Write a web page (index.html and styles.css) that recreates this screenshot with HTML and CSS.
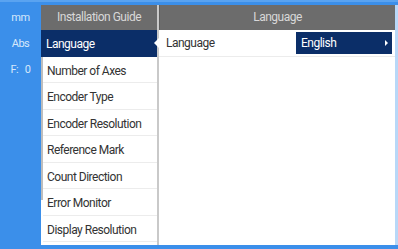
FILE: index.html
```html
<!DOCTYPE html>
<html lang="en">
<head>
    <meta charset="UTF-8">
    <title>Installation Guide</title>
    <link rel="stylesheet" href="styles.css">
</head>
<body>
    <div class="screen">
        <div class="status">
            <div class="status-item">mm</div>
            <div class="status-item">Abs</div>
            <div class="status-item">F:&nbsp;&nbsp;&nbsp;0</div>
        </div>

        <div class="menu">
            <div class="panel-head">Installation Guide</div>
            <ul class="menu-list">
                <li class="menu-item selected">Language</li>
                <li class="menu-item">Number of Axes</li>
                <li class="menu-item">Encoder Type</li>
                <li class="menu-item">Encoder Resolution</li>
                <li class="menu-item">Reference Mark</li>
                <li class="menu-item">Count Direction</li>
                <li class="menu-item">Error Monitor</li>
                <li class="menu-item">Display Resolution</li>
            </ul>
        </div>

        <div class="detail">
            <div class="panel-head">Language</div>
            <div class="setting">
                <span class="setting-label">Language</span>
                <span class="setting-value">English<span class="caret"></span></span>
            </div>
        </div>
    </div>
</body>
</html>
```

FILE: styles.css
```css
html, body {
    margin: 0;
    height: 249px;
    overflow: hidden;
}
body {
    background: #3b8fea;
    font-family: Roboto, "Liberation Sans", Arial, sans-serif;
    font-size: 12px;
    letter-spacing: -0.5px;
    color: #333;
    border-top: 2px solid #5aa3f0;
    box-sizing: border-box;
}
.screen {
    display: flex;
    height: 240px;
    padding-top: 3px;
}
.status {
    width: 41px;
    display: flex;
    flex-direction: column;
    align-items: center;
    padding-top: 6px;
    gap: 13px;
    color: #d6e8fb;
    font-size: 11px;
}
.panel-head {
    height: 25px;
    line-height: 25px;
    background: #6c6c6c;
    color: #d8d8d8;
    text-align: center;
    font-size: 12px;
}
.menu {
    width: 116px;
    background: #fff;
    border-right: 2px solid #c9c9c9;
    display: flex;
    flex-direction: column;
}
.menu-list {
    list-style: none;
    margin: 0;
    padding: 0 0 0 2px;
    flex: 1;
    position: relative;
}
/* scroll indicator */
.menu-list::before {
    content: "";
    position: absolute;
    left: 0;
    top: 0;
    width: 2px;
    height: 170px;
    background: #bdbdbd;
}
.menu-item {
    height: 26.5px;
    line-height: 28px;
    padding-left: 4px;
    border-bottom: 1px solid #ececec;
    box-sizing: border-box;
    position: relative;
    white-space: nowrap;
}
.menu-item.selected {
    background: #0b2e68;
    color: #fff;
    margin-left: -2px;
    padding-left: 5px;
    border-bottom: none;
    z-index: 1;
}
.menu-item.selected::after {
    content: "";
    position: absolute;
    right: -2px;
    top: 8px;
    border-style: solid;
    border-width: 5px 5px 5px 0;
    border-color: transparent #fff transparent transparent;
}
.detail {
    flex: 1;
    background: #fff;
    border-right: 3px solid #b8d8f8;
}
.detail .panel-head {
    border-left: 1px solid #5e5e5e;
}
.setting {
    height: 27px;
    display: flex;
    align-items: center;
    justify-content: space-between;
    padding: 0 3px 0 7px;
    border-bottom: 1px solid #ececec;
    box-sizing: border-box;
}
.setting-value {
    width: 96px;
    height: 22px;
    line-height: 23px;
    background: #0b2e68;
    color: #fff;
    padding-left: 5px;
    box-sizing: border-box;
    position: relative;
}
.caret {
    position: absolute;
    right: 4px;
    top: 8px;
    border-style: solid;
    border-width: 3px 0 3px 3px;
    border-color: transparent transparent transparent #fff;
}
```
